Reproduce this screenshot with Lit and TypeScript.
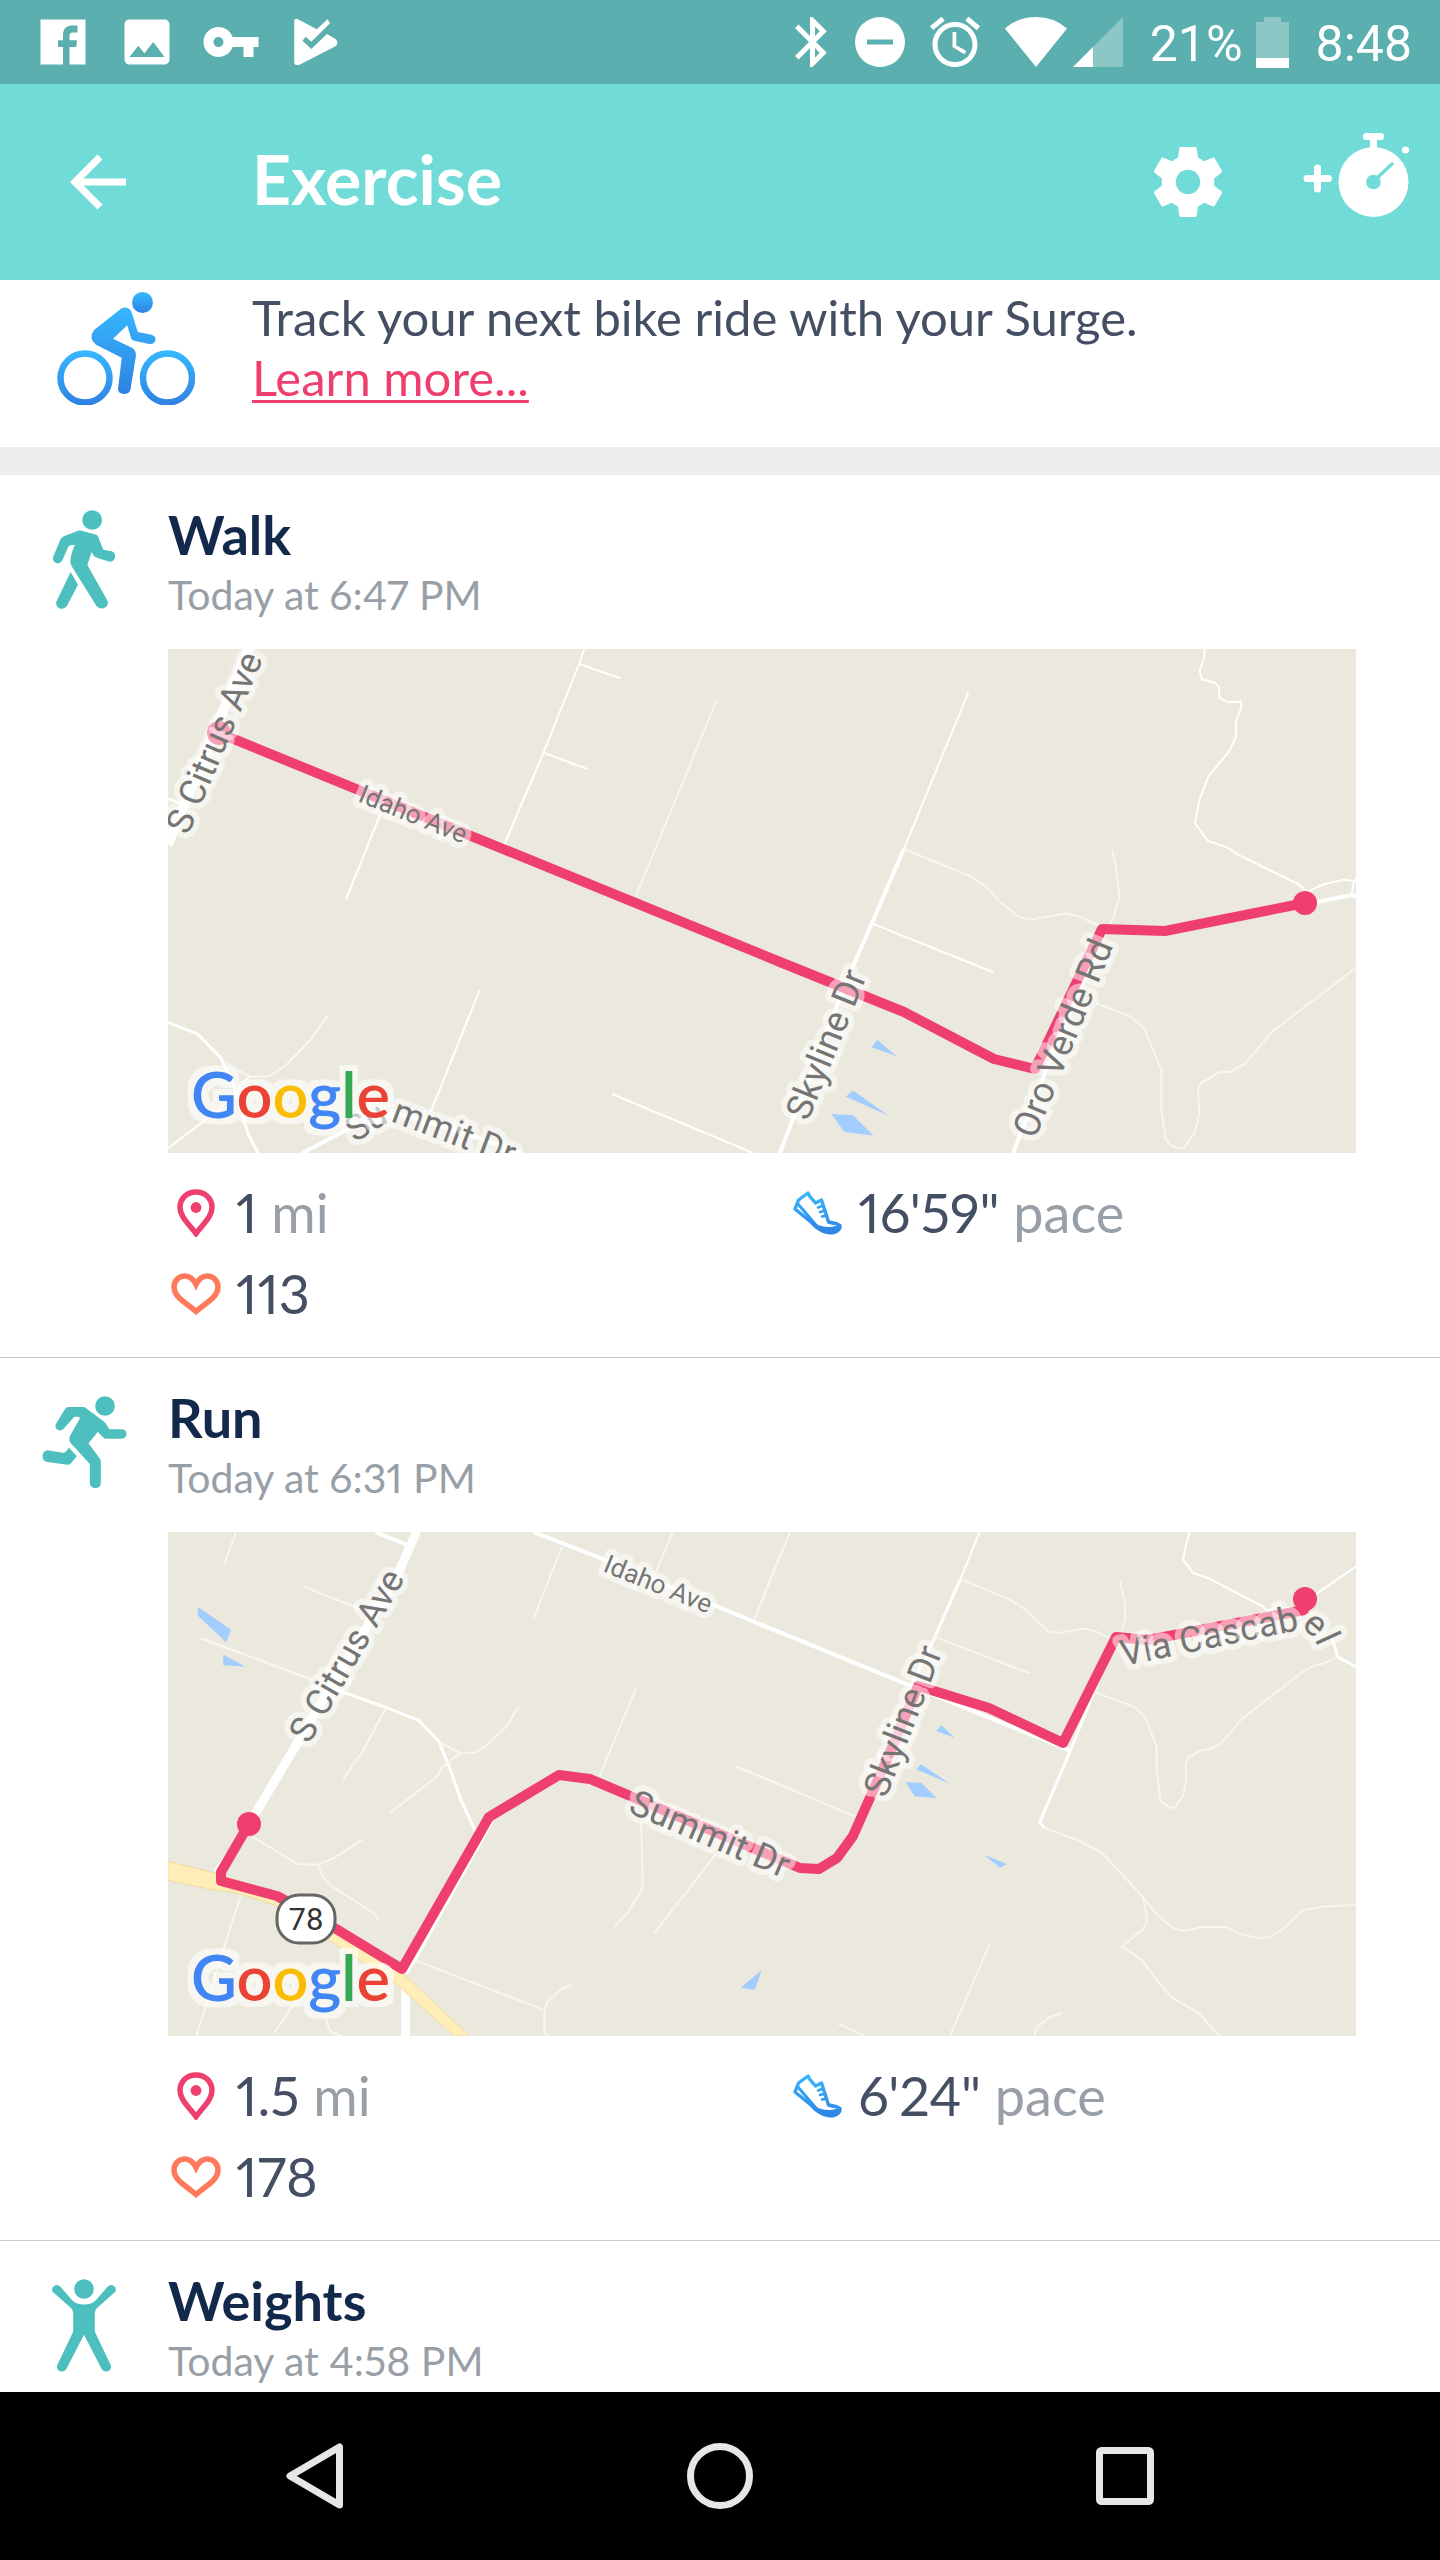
import { LitElement, html, svg, css, nothing, type SVGTemplateResult, type TemplateResult } from "lit";
import { customElement, property } from "lit/decorators.js";

/* ---------- icons ---------- */

const photoPath =
  "M21 19V5c0-1.1-.9-2-2-2H5c-1.1 0-2 .9-2 2v14c0 1.1.9 2 2 2h14c1.1 0 2-.9 2-2zM8.5 13.5l2.5 3.01L14.5 12l4.5 6H5l3.5-4.5z";
const keyPath =
  "M12.65 10C11.83 7.67 9.61 6 7 6c-3.31 0-6 2.69-6 6s2.69 6 6 6c2.61 0 4.83-1.67 5.65-4H17v4h4v-4h2v-4H12.65zM7 14c-1.1 0-2-.9-2-2s.9-2 2-2 2 .9 2 2-.9 2-2 2z";
const facebookPath =
  "M3 3h18v18h-6.4v-7h2.7l.3-2.7h-3V9.6c0-.9.3-1.4 1.6-1.4h1.6V5.4h-2.2c-2.4 0-3.6 1.4-3.6 3.9v2h-2V14h2v7H3z";
const playCheckPath =
  "M3.7 3.6C3.7 2.7 4.6 2.5 5.2 2.9L12.7 6.9L17 2.9L18 4.5L10.5 11.9L8.3 9.9L7 11.5L10.5 14.8L16.8 8.8L20.2 10.8Q21.8 12.2 20.2 13.7L6 21Q3.7 21.8 3.7 20z";
const bluetoothPath =
  "M17.71 7.71L12 2h-1v7.59L6.41 5 5 6.41 10.59 12 5 17.59 6.41 19 11 14.41V22h1l5.71-5.71-4.3-4.29 4.3-4.29zM13 5.83l1.88 1.88L13 9.59V5.83zm1.88 10.46L13 18.17v-3.76l1.88 1.88z";
const alarmPath =
  "M22 5.72l-4.6-3.86-1.29 1.53 4.6 3.86L22 5.72zM7.88 3.39L6.6 1.86 2 5.71l1.29 1.53 4.59-3.85zM12.5 8H11v6l4.75 2.85.75-1.23-4-2.37V8zM12 4c-4.97 0-9 4.03-9 9s4.02 9 9 9c4.97 0 9-4.03 9-9s-4.03-9-9-9zm0 16c-3.87 0-7-3.13-7-7s3.13-7 7-7 7 3.13 7 7-3.13 7-7 7z";
const gearPath =
  "M19.43 12.98c.04-.32.07-.64.07-.98s-.03-.66-.07-.98l2.11-1.65c.19-.15.24-.42.12-.64l-2-3.46c-.12-.22-.39-.3-.61-.22l-2.49 1c-.52-.4-1.08-.73-1.69-.98l-.38-2.65C14.46 2.18 14.25 2 14 2h-4c-.25 0-.46.18-.49.42l-.38 2.65c-.61.25-1.17.59-1.69.98l-2.49-1c-.23-.09-.49 0-.61.22l-2 3.46c-.13.22-.07.49.12.64l2.11 1.65c-.04.32-.07.65-.07.98s.03.66.07.98l-2.11 1.65c-.19.15-.24.42-.12.64l2 3.46c.12.22.39.3.61.22l2.49-1c.52.4 1.08.73 1.69.98l.38 2.65c.03.24.24.42.49.42h4c.25 0 .46-.18.49-.42l.38-2.65c.61-.25 1.17-.59 1.69-.98l2.49 1c.23.09.49 0 .61-.22l2-3.46c.12-.22.07-.49-.12-.64l-2.11-1.65zM12 15.5c-1.93 0-3.5-1.57-3.5-3.5s1.57-3.5 3.5-3.5 3.5 1.57 3.5 3.5-1.57 3.5-3.5 3.5z";

const glyph = (d: string) => html`
  <svg width="60" height="60" viewBox="0 0 24 24" fill="#fff" aria-hidden="true"><path d=${d} /></svg>
`;

const bluetooth = html`
  <svg width="35" height="50" viewBox="5 2 14 20" fill="#fff" aria-hidden="true"><path d=${bluetoothPath} /></svg>
`;
const doNotDisturb = html`
  <svg width="50" height="50" viewBox="0 0 50 50" aria-hidden="true">
    <circle cx="25" cy="25" r="25" fill="#fff" />
    <path d="M12 25H38" stroke="#5bafae" stroke-width="5" />
  </svg>
`;
const alarm = html`
  <svg width="50" height="50" viewBox="2 2 20 20" fill="#fff" aria-hidden="true"><path d=${alarmPath} /></svg>
`;
const wifi = html`
  <svg width="62" height="50" viewBox="0 0 62 50" fill="#fff" aria-hidden="true">
    <path d="M31 50L0 11.5Q13 0 31 0T62 11.5z" />
  </svg>
`;
const signal = html`
  <svg width="50" height="50" viewBox="0 0 50 50" fill="#fff" aria-hidden="true">
    <path d="M0 50L50 0V50z" fill-opacity=".3" />
    <path d="M0 50L20 30V50z" />
  </svg>
`;
const battery = html`
  <svg width="33" height="51" viewBox="0 0 33 51" fill="#fff" aria-hidden="true">
    <path d="M8 0h17v5h8v36H0V5h8z" fill-opacity=".3" />
    <path d="M0 41h33v10H0z" />
  </svg>
`;
const backArrow = html`
  <svg width="56" height="56" viewBox="0 0 56 56" fill="none" stroke="#fff" stroke-width="7" aria-hidden="true">
    <path d="M30 3L5 28L30 53M5 28H56" />
  </svg>
`;
const gear = html`
  <svg width="84" height="84" viewBox="0 0 24 24" fill="#fff" aria-hidden="true"><path d=${gearPath} /></svg>
`;
const addStopwatch = html`
  <svg width="112" height="98" viewBox="0 0 112 98" aria-hidden="true">
    <path d="M7 45.500H28.500M17.500 35V56" stroke="#fff" stroke-width="7" stroke-linecap="round" />
    <circle cx="73.500" cy="49" r="35" fill="#fff" />
    <path d="M73.500 4V20" stroke="#fff" stroke-width="7" />
    <rect x="63" y="0" width="21" height="7" rx="3" fill="#fff" />
    <circle cx="105.500" cy="17" r="3.600" fill="#fff" />
    <circle cx="73.500" cy="49" r="7.300" fill="#71dcd7" />
    <path d="M76 46L92 31" stroke="#71dcd7" stroke-width="3.500" stroke-linecap="round" />
  </svg>
`;

const cyclist = html`
  <svg width="138" height="113" viewBox="0 0 138 113" aria-hidden="true">
    <defs>
      <linearGradient id="rider" gradientUnits="userSpaceOnUse" x1="0" y1="12" x2="0" y2="102">
        <stop offset="0" stop-color="#36b9ff" />
        <stop offset="1" stop-color="#2f82e2" />
      </linearGradient>
      <linearGradient id="wheel" gradientUnits="userSpaceOnUse" x1="0" y1="58" x2="0" y2="113">
        <stop offset="0" stop-color="#36b9ff" />
        <stop offset="1" stop-color="#2f82e2" />
      </linearGradient>
      <linearGradient id="head" x1="0" y1="0" x2="0" y2="1">
        <stop offset="0" stop-color="#36b9ff" />
        <stop offset="1" stop-color="#2f82e2" />
      </linearGradient>
    </defs>
    <circle cx="28" cy="86" r="24.500" fill="none" stroke="url(#wheel)" stroke-width="6.500" />
    <circle cx="110.500" cy="86" r="24.500" fill="none" stroke="url(#wheel)" stroke-width="6.500" />
    <circle cx="85.500" cy="10.500" r="10.500" fill="url(#head)" />
    <path
      fill="url(#rider)"
      d="M62.400 18Q67.400 13.500 73 17.500Q74.500 19 75 21.500L80.800 40L94.500 42.700Q99 44.200 98.500 48Q97.500 52.500 92.200 52L77 48.700Q74.500 48 74 45.700L70.200 33.300L56 46.700L73.900 55.300Q79.500 58 78.900 64L73.400 98Q72 102 67 102Q61 101.500 61 97L64.700 65.700L39 52.700Q31 46.500 37 38z"
    />
  </svg>
`;

const walker = html`
  <svg width="63" height="99" viewBox="158 28 189 297" fill="#4ebfbf" aria-hidden="true">
    <circle cx="275.500" cy="58" r="29.500" />
    <path
      d="M238 89L288 102Q291 103 293 107L308 145Q309 147 312 148L334 152Q346 156 344 170Q341 184 328 183L294 173Q283 170 279 163L274 154L261 193L320 297Q327 310 317 319Q300 330 288 315L215 198Q210 190 210 182Q212 155 224 132L210 134Q205 135 203 140L187 177Q182 188 170 188Q157 185 158 170L180 117Q184 109 192 106z"
    />
    <path d="M211 214L233 252L201 314Q194 326 180 324Q165 319 168 303z" />
  </svg>
`;
const runner = html`
  <svg width="85" height="92" viewBox="124 708 254 276" fill="#4ebfbf" aria-hidden="true">
    <circle cx="312.500" cy="738" r="29.500" />
    <path
      d="M204 741H247Q252 741 256 745L306 782Q315 788 319 797L325 808H364Q377 810 377 822Q377 834 364 836H314Q309 836 306 831L291 816L263 850L296 895Q300 900 300 906V968Q300 984 284 984Q267 983 267 968V912L210 850Q204 843 206 830L236 777Q239 770 231 770H223Q219 770 217 774L190 805Q184 813 174 811Q162 807 164 794L192 748Q196 741 204 741z"
    />
    <path d="M204 863L228 888L211 909Q207 915 200 914L139 906Q125 903 125 888Q126 873 140 871L186 878Q193 879 196 874z" />
  </svg>
`;
const stretcher = html`
  <svg width="64" height="93" viewBox="156 717 193 280" fill="#4ebfbf" aria-hidden="true">
    <circle cx="252.500" cy="747" r="29.500" />
    <path
      d="M158 755Q153 742 164 736Q176 731 184 743L217 781Q230 794 252.500 794Q275 794 288 781L321 743Q329 731 341 736Q352 742 347 755L291 805Q285 811 285 820V875L333 976Q337 990 325 995Q311 999 305 987L252.500 885L200 987Q194 999 180 995Q168 990 172 976L220 875V820Q220 811 214 805z"
    />
  </svg>
`;

const pin = html`
  <svg width="38" height="48" viewBox="0 0 38 48" aria-hidden="true">
    <path
      d="M19 3C9.500 3 3 10 3 18.500C3 28 12 35 19 44.500C26 35 35 28 35 18.500C35 10 28.500 3 19 3z"
      fill="none" stroke="#ef3f6f" stroke-width="5.500"
    />
    <circle cx="19" cy="18.500" r="5.400" fill="#ef3f6f" />
  </svg>
`;
const heart = html`
  <svg width="50" height="42" viewBox="0 0 50 42" aria-hidden="true">
    <path
      d="M25 11.500C22 5.500 18 3 14 3C7.500 3 3 8 3 14C3 24 14 29 25 38.500C36 29 47 24 47 14C47 8 42.500 3 36 3C32 3 28 5.500 25 11.500z"
      fill="none" stroke="#ff7a5c" stroke-width="5.500"
    />
  </svg>
`;
const shoe = html`
  <svg width="50" height="44" viewBox="0 0 50 44" fill="none" stroke-linejoin="round" stroke-linecap="round" aria-hidden="true">
    <defs>
      <linearGradient id="shoe" gradientUnits="userSpaceOnUse" x1="0" y1="0" x2="0" y2="44">
        <stop offset="0" stop-color="#36b9ff" />
        <stop offset="1" stop-color="#2f82e2" />
      </linearGradient>
    </defs>
    <g stroke="url(#shoe)">
      <path
        stroke-width="3.400"
        d="M15 2L16.500 5L22.500 12L28.500 9L35.500 31Q39 32 43 32.500L47 34.500Q47.500 39 41 41.500Q33 42.500 27 38.500Q22 35.500 18 31L2 18L5.500 9z"
      />
      <path stroke-width="3" d="M5 13L22 33Q27 38 33 39L41 39" />
      <path stroke-width="5" d="M27 37Q36 40 44 37" />
      <path stroke-width="2.600" d="M25 16.500L30.500 14.500M27 21L32.500 19.500M29 25.500L34 24.500" />
    </g>
  </svg>
`;

/* ---------- maps ---------- */

interface Road {
  d: string;
  width?: number;
  faint?: boolean;
}

interface Tile {
  matrix: string;
  area?: string;
  roads: Road[];
  ponds: string[];
}

interface Label {
  text: string;
  size: number;
  x?: number;
  y?: number;
  angle?: number;
  curve?: string;
}

interface RouteMap {
  name: string;
  tiles: Tile[];
  route: string;
  ends: [number, number][];
  labels: Label[];
  shield?: { text: string; x: number; y: number };
}

const walkMap: RouteMap = {
  name: "Route along Idaho Ave and Oro Verde Rd",
  tiles: [
    {
      matrix: "matrix(.3954 0 0 .3333 -8 -9)",
      roads: [
        { d: "M226 20L20 614", width: 10 },
        { d: "M20 475L50 490", width: 3 },
        { d: "M1075 20L1060 72L970 338L870 615M1060 72L1165 115M970 338L1080 387" },
        { d: "M558 520L470 780M808 1052L683 1420M1143 1362L1500 1539" },
        { d: "M1407 183L1203 770M425 1125L382 1198L318 1276L275 1310H225L170 1270", faint: true },
        { d: "M20 1147L95 1182L155 1255L185 1330L222 1480L248 1539", width: 3 },
        { d: "M20 1525L160 1400L225 1310", width: 2 },
        { d: "M360 1539L480 1465L600 1420L760 1475L915 1539", width: 4 },
      ],
      ponds: [],
    },
    {
      matrix: "matrix(.3954 0 0 .3333 592 -9)",
      roads: [
        { d: "M527 157L364 627M283 850L590 997" },
        { d: "M364 627L283 850L220 1020L50 1539", width: 4 },
        { d: "M364 627L530 708L572 740L608 787L657 833L690 838L770 821L805 828L860 858", faint: true },
        { d: "M890 630L900 680L909 770L893 835L880 860", faint: true },
        {
          d: "M1124 27V50L1112 92L1118 118L1150 128L1160 140L1163 175L1185 187L1215 185L1218 200L1204 245L1203 293L1187 333L1134 410L1112 477L1100 550L1133 603L1183 623L1210 645L1360 732L1385 755L1425 733L1477 719L1507 724",
          width: 2,
        },
        { d: "M1400 788L1495 765L1510 770", width: 4 },
        { d: "M1497 765L1500 735L1507 715", width: 2 },
        {
          d: "M850 1090L938 1130L971 1163L1015 1290V1410L1026 1497L1037 1514L1054 1524H1073L1100 1475L1111 1422L1108 1350L1115 1330L1163 1296H1188L1226 1272L1298 1172L1507 984",
          faint: true,
        },
        { d: "M870 880L720 1300L640 1539", width: 4 },
      ],
      ponds: ["M297 1200L347 1250L325 1240L282 1222z", "M236 1352L324 1427L217 1370z", "M181 1422L235 1426L287 1487L213 1476z"],
    },
  ],
  route: "M51 84L612 313L736 363L826 410L867 420L934 280L997 282L1137 254",
  ends: [
    [51, 84],
    [1137, 254],
  ],
  labels: [
    { text: "S Citrus Ave", size: 36, x: 20, y: 187, angle: -67 },
    { text: "Idaho Ave", size: 26, x: 189, y: 152, angle: 22 },
    { text: "Skyline Dr", size: 36, x: 640, y: 473, angle: -68 },
    { text: "Oro Verde Rd", size: 36, x: 867, y: 491, angle: -68 },
    { text: "Summit Dr", size: 36, curve: "M187 494L222 472L360 524" },
  ],
};

const runMap: RouteMap = {
  name: "Route along Summit Dr, Skyline Dr and Via Cascabel",
  tiles: [
    {
      matrix: "matrix(.3954 0 0 .338 -8 -12)",
      area: "M20 1010L140 1045L300 1105L600 1330L640 1370L783 1527H745L590 1365L430 1245L300 1143L200 1105L125 1092L20 1066z",
      roads: [
        { d: "M650 30L600 165L225 900", width: 9 },
        { d: "M225 900L140 1040", width: 4 },
        { d: "M545 36L628 75M945 36L1120 115L1568 333", width: 4 },
        { d: "M440 500L568 553L655 593L705 655L730 725L760 825L797 920", width: 3 },
        { d: "M621 1360V1527", width: 9 },
        { d: "M838 890L648 1290L621 1340", width: 5 },
        { d: "M192 36L163 130M365 198L520 270M103 350L390 475M1017 78L945 290M1297 36L1250 165M1568 105L1503 295", faint: true },
        { d: "M572 555L510 690L485 730L463 770M1204 497L1112 757M1458 730L1568 783", faint: true },
        { d: "M710 660L760 690L798 689L830 663L875 612L908 550M760 690L730 715L712 735L700 760L583 865", faint: true },
        { d: "M235 938L348 1018L400 1020L440 1000L512 945M400 1020L412 1055L430 1080L542 1165L555 1187", faint: true },
        { d: "M205 1110L160 1270L92 1527M365 1385L288 1520M415 1460L430 1513L462 1527", faint: true },
        { d: "M1217 895L1221 1080L1216 1100L1180 1165L1148 1203M1405 990L1250 1222", faint: true },
        { d: "M645 1303L972 1450V1515L980 1527M972 1450L980 1425L1010 1392L1040 1375", faint: true },
      ],
      ponds: ["M97 258L180 325L167 362L95 282z", "M160 398L216 434L160 430z", "M1522 1332L1504 1390L1468 1384z"],
    },
    {
      matrix: "matrix(.3954 0 0 .338 592 -12)",
      roads: [
        { d: "M555 36L507 175" },
        { d: "M507 175L437 360L380 495", width: 3 },
        { d: "M0 308L380 490L770 675L785 682", width: 4 },
        { d: "M900 350L785 682L708 893L718 910", width: 3 },
        { d: "M1445 340L1461 405L1507 434", width: 3 },
        { d: "M76 36L0 250M440 345L680 453M0 758L240 877M582 1252L480 1527M197 1490L268 1527", faint: true },
        { d: "M507 175L633 236L668 262L730 330L755 334L820 321L850 330L885 350", faint: true },
        { d: "M910 180L922 240L924 290L915 330", faint: true },
        {
          d: "M718 910L805 948L865 985L968 1115L1000 1163L1045 1208L1075 1216L1115 1204H1178L1215 1225L1262 1238L1290 1234L1325 1208L1372 1155L1420 1144L1507 1138",
          faint: true,
        },
        { d: "M968 1115L978 1170V1190L967 1212L915 1262L965 1302L1008 1368L1042 1413L1108 1457L1163 1527", faint: true },
        { d: "M765 1458L730 1472L700 1502L694 1527", faint: true },
        { d: "M1086 36L1078 70L1070 118L1096 157L1135 173L1270 255L1285 268L1320 250M1405 220L1507 138" },
        {
          d: "M1461 405L1425 425L1403 430L1375 447L1220 587L1165 662L1138 678L1118 680L1082 703L1076 725L1078 770L1070 815L1050 850L1035 851L1013 830L1003 740V668L972 580L945 552L848 510",
          faint: true,
        },
      ],
      ponds: [
        "M459 608L492 644L445 624z",
        "M407 723L480 780L396 738z",
        "M368 775L408 778L447 823L391 817z",
        "M567 991L625 1018L607 1029z",
      ],
    },
  ],
  route:
    "M81 292L53 340V349L109 364L160 392L234 437L321 285L391 243L422 247L632 336L651 337L669 326L685 304L720 225L750 154L821 176L895 211L948 105L980 108L1136 78L1137 67",
  ends: [
    [81, 292],
    [1137, 67],
  ],
  labels: [
    { text: "S Citrus Ave", size: 36, x: 141, y: 213, angle: -60 },
    { text: "Idaho Ave", size: 26, x: 434, y: 39, angle: 22 },
    { text: "Summit Dr", size: 36, x: 459, y: 280, angle: 23 },
    { text: "Skyline Dr", size: 36, x: 718, y: 267, angle: -69 },
    { text: "Via Cascabel", size: 36, curve: "M955 134L1136 97L1146 106L1156 128" },
  ],
  shield: { text: "78", x: 138, y: 387 },
};

const logoLetters: [string, string][] = [
  ["G", "#4285f4"],
  ["o", "#ea4335"],
  ["o", "#fbbc05"],
  ["g", "#4285f4"],
  ["l", "#34a853"],
  ["e", "#ea4335"],
];

@customElement("route-map")
export class RouteMapView extends LitElement {
  @property({ attribute: false }) map!: RouteMap;

  static styles = css`
    :host {
      display: block;
    }
    .map {
      display: block;
      width: 100%;
      height: auto;
      background: #ebe9dd;
    }
    .road {
      fill: none;
      stroke: #fff;
      vector-effect: non-scaling-stroke;
    }
    .faint {
      stroke: #f7f6f1;
    }
    .highway {
      fill: #ffeeb8;
      stroke: #f0dc9c;
      stroke-width: 1px;
      vector-effect: non-scaling-stroke;
    }
    .pond {
      fill: #a3ccff;
    }
    .route {
      fill: none;
      stroke: #ef3f6f;
      stroke-width: 10px;
      stroke-linejoin: round;
    }
    .end {
      fill: #ef3f6f;
    }
    .label {
      font-family: Roboto, "Liberation Sans", sans-serif;
      fill: #757575;
      stroke: #fff;
      stroke-opacity: 0.5;
      stroke-width: 12px;
      stroke-linejoin: round;
      paint-order: stroke;
    }
    .shield {
      fill: #fff;
      stroke: #666;
      stroke-width: 3px;
    }
    .number {
      font: 31px Roboto, "Liberation Sans", sans-serif;
      fill: #333;
      text-anchor: middle;
    }
    .logo {
      font: 600 63px Lato, "Liberation Sans", sans-serif;
      filter: url(#halo);
    }
  `;

  private tile(t: Tile): SVGTemplateResult {
    return svg`
      <g transform=${t.matrix}>
        ${t.roads.map((r) => svg`<path class=${r.faint ? "road faint" : "road"} stroke-width=${r.width ?? 2} d=${r.d} />`)}
        ${t.area ? svg`<path class="highway" d=${t.area} />` : nothing}
        ${t.ponds.map((d) => svg`<path class="pond" d=${d} />`)}
      </g>`;
  }

  private label(l: Label, i: number): SVGTemplateResult {
    if (l.curve) {
      return svg`
        <path id=${`curve-${i}`} d=${l.curve} fill="none" />
        <text class="label" font-size=${l.size}><textPath href=${`#curve-${i}`}>${l.text}</textPath></text>`;
    }
    return svg`
      <text class="label" font-size=${l.size} transform=${`translate(${l.x} ${l.y}) rotate(${l.angle})`}>${l.text}</text>`;
  }

  render() {
    const m = this.map;
    return html`
      <svg class="map" viewBox="0 0 1188 504" role="img" aria-label=${m.name}>
        <defs>
          <filter id="halo" x="-10%" y="-20%" width="120%" height="140%" color-interpolation-filters="sRGB">
            <feMorphology in="SourceAlpha" operator="dilate" radius="6" result="spread" />
            <feFlood flood-color="#fff" flood-opacity=".6" />
            <feComposite in2="spread" operator="in" result="glow" />
            <feMerge>
              <feMergeNode in="glow" />
              <feMergeNode in="SourceGraphic" />
            </feMerge>
          </filter>
        </defs>
        ${m.tiles.map((t) => this.tile(t))}
        <path class="route" d=${m.route} />
        ${m.ends.map(([x, y]) => svg`<circle class="end" cx=${x} cy=${y} r="12" />`)}
        ${m.labels.map((l, i) => this.label(l, i))}
        ${m.shield
          ? svg`
            <rect class="shield" x=${m.shield.x - 29} y=${m.shield.y - 24} width="58" height="48" rx="22" />
            <text class="number" x=${m.shield.x} y=${m.shield.y + 11}>${m.shield.text}</text>`
          : nothing}
        <text class="logo" x="23" y="469">${logoLetters.map(([c, fill]) => svg`<tspan fill=${fill}>${c}</tspan>`)}</text>
      </svg>
    `;
  }
}

/* ---------- exercise log ---------- */

interface Stat {
  icon: TemplateResult;
  name: string;
  value: string;
  unit?: string;
}

interface Exercise {
  title: string;
  time: string;
  icon: TemplateResult;
  map?: RouteMap;
  stats: Stat[];
}

const exercises: Exercise[] = [
  {
    title: "Walk",
    time: "Today at 6:47 PM",
    icon: walker,
    map: walkMap,
    stats: [
      { icon: pin, name: "Distance", value: "1", unit: "mi" },
      { icon: shoe, name: "Pace", value: "16'59\"", unit: "pace" },
      { icon: heart, name: "Heart rate", value: "113" },
    ],
  },
  {
    title: "Run",
    time: "Today at 6:31 PM",
    icon: runner,
    map: runMap,
    stats: [
      { icon: pin, name: "Distance", value: "1.5", unit: "mi" },
      { icon: shoe, name: "Pace", value: "6'24\"", unit: "pace" },
      { icon: heart, name: "Heart rate", value: "178" },
    ],
  },
  { title: "Weights", time: "Today at 4:58 PM", icon: stretcher, stats: [] },
];

@customElement("app-root")
export class AppRoot extends LitElement {
  static styles = css`
    :host {
      display: flex;
      flex-direction: column;
      height: 100vh;
      background: #fff;
      color: #454f63;
      font-family: Lato, "Liberation Sans", sans-serif;
      font-variant-numeric: proportional-nums;
    }
    svg {
      display: block;
      flex: none;
    }
    button {
      display: flex;
      align-items: center;
      justify-content: center;
      margin: 0;
      padding: 0;
      border: 0;
      background: none;
      cursor: pointer;
    }
    h1,
    h2,
    p,
    ul {
      margin: 0;
      padding: 0;
    }
    .status {
      display: flex;
      align-items: center;
      justify-content: space-between;
      height: 84px;
      flex: none;
      padding: 0 28px 0 33px;
      background: #5bafae;
      color: #fff;
      font: 50px/60px Roboto, "Liberation Sans", sans-serif;
    }
    .notices,
    .radios,
    .system,
    .power {
      display: flex;
      align-items: center;
    }
    .notices {
      gap: 24px;
    }
    .system {
      gap: 27px;
    }
    .radios {
      gap: 25px;
    }
    .network {
      display: flex;
      gap: 6px;
    }
    .power {
      gap: 13px;
    }
    .reading {
      padding-top: 3px;
    }
    .appbar {
      display: flex;
      align-items: center;
      gap: 70px;
      height: 196px;
      flex: none;
      padding: 0 28px 0 14px;
      background: #71dcd7;
      color: #fff;
    }
    .back {
      width: 168px;
      height: 168px;
    }
    .heading {
      flex: 1;
      padding-bottom: 6px;
      font-size: 68px;
      line-height: 80px;
      font-weight: 700;
    }
    .log {
      flex: 1;
      min-height: 0;
      overflow-y: auto;
      scrollbar-width: none;
    }
    .promo {
      display: grid;
      grid-template-columns: 252px 1fr;
      border-bottom: 28px solid #ededed;
    }
    .rider {
      display: flex;
      justify-content: center;
      padding-top: 12px;
    }
    .pitch {
      padding: 7px 0 40px;
      font-size: 49px;
      line-height: 60px;
    }
    .more {
      color: #ef3f6f;
      text-decoration-thickness: 3px;
      text-underline-offset: 4px;
    }
    .entries {
      list-style: none;
    }
    .entry {
      display: grid;
      grid-template-columns: 168px 1fr;
      padding-bottom: 23px;
      border-bottom: 1px solid #c8cbcb;
    }
    .badge {
      display: flex;
      align-items: center;
      justify-content: center;
      height: 168px;
    }
    .body {
      padding: 24px 84px 0 0;
    }
    .title {
      color: #13294b;
      font-size: 54px;
      line-height: 72px;
      font-weight: 700;
    }
    .time {
      color: #999fa6;
      font-size: 41px;
      line-height: 48px;
    }
    .route {
      margin-top: 30px;
    }
    .stats {
      display: grid;
      grid-template-columns: 11fr 10fr;
      padding-top: 19px;
    }
    .stat {
      display: flex;
      align-items: center;
      gap: 12px;
      font-size: 54px;
      line-height: 81px;
    }
    .mark {
      display: flex;
      justify-content: center;
      width: 56px;
    }
    .unit {
      color: #999fa6;
    }
    .navbar {
      display: grid;
      grid-template-columns: repeat(3, 1fr);
      height: 168px;
      flex: none;
      padding: 0 112px;
      background: #000;
    }
  `;

  private stat(s: Stat) {
    return html`
      <div class="stat">
        <span class="mark" title=${s.name}>${s.icon}</span>
        <span>${s.value}${s.unit ? html` <span class="unit">${s.unit}</span>` : nothing}</span>
      </div>
    `;
  }

  private entry(e: Exercise) {
    return html`
      <li class="entry">
        <div class="badge">${e.icon}</div>
        <div class="body">
          <h2 class="title">${e.title}</h2>
          <p class="time">${e.time}</p>
          ${e.map ? html`<route-map class="route" .map=${e.map}></route-map>` : nothing}
          ${e.stats.length ? html`<div class="stats">${e.stats.map((s) => this.stat(s))}</div>` : nothing}
        </div>
      </li>
    `;
  }

  render() {
    return html`
      <div class="status">
        <div class="notices">${glyph(facebookPath)} ${glyph(photoPath)} ${glyph(keyPath)} ${glyph(playCheckPath)}</div>
        <div class="system">
          <div class="radios">
            ${bluetooth} ${doNotDisturb} ${alarm}
            <div class="network">${wifi} ${signal}</div>
          </div>
          <div class="power"><span class="reading">21%</span> ${battery}</div>
          <span class="reading">8:48</span>
        </div>
      </div>
      <header class="appbar">
        <button class="back" aria-label="Back">${backArrow}</button>
        <h1 class="heading">Exercise</h1>
        <button aria-label="Settings">${gear}</button>
        <button aria-label="Add exercise">${addStopwatch}</button>
      </header>
      <main class="log">
        <section class="promo">
          <div class="rider">${cyclist}</div>
          <div class="pitch">
            <p>Track your next bike ride with your Surge.</p>
            <a class="more" href="#learn">Learn more...</a>
          </div>
        </section>
        <ul class="entries">
          ${exercises.map((e) => this.entry(e))}
        </ul>
      </main>
      <nav class="navbar">
        <button aria-label="Back">
          <svg width="57" height="66" viewBox="0 0 57 66" fill="none" stroke="#e6e6e6" stroke-width="7" stroke-linejoin="round">
            <path d="M53.500 4V62L4 33z" />
          </svg>
        </button>
        <button aria-label="Home">
          <svg width="66" height="66" viewBox="0 0 66 66" fill="none" stroke="#e6e6e6" stroke-width="7">
            <circle cx="33" cy="33" r="29.500" />
          </svg>
        </button>
        <button aria-label="Overview">
          <svg width="58" height="58" viewBox="0 0 58 58" fill="none" stroke="#e6e6e6" stroke-width="7">
            <rect x="3.500" y="3.500" width="51" height="51" rx="2" />
          </svg>
        </button>
      </nav>
    `;
  }
}
